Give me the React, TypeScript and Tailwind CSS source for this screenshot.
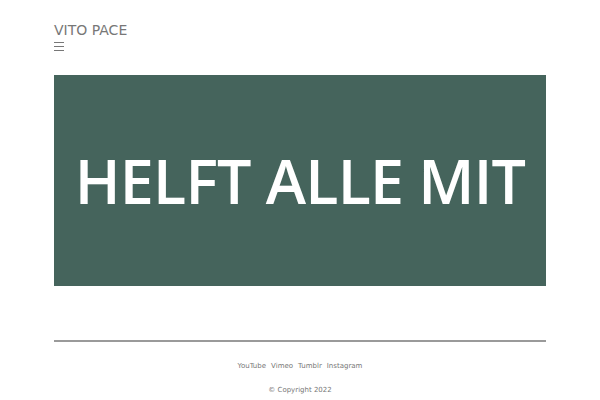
import React from "react";

const links = ["YouTube", "Vimeo", "Tumblr", "Instagram"];

export default function App() {
  return (
    <div className="w-[600px] h-[400px] bg-white overflow-hidden font-['DejaVu_Sans',sans-serif]">
      <div className="mx-[54px]">
        {/* header */}
        <header className="pt-[22px]">
          <div className="text-[14px] leading-[17px] text-[#777]">VITO PACE</div>
          <div className="mt-[3px] flex flex-col gap-[3px] w-[10px]">
            <span className="block h-px bg-[#777]" />
            <span className="block h-px bg-[#777]" />
            <span className="block h-px bg-[#777]" />
          </div>
        </header>

        {/* banner */}
        <div className="mt-[24px] h-[211px] bg-[#45645c] flex items-center justify-center">
          <span className="font-['Open_Sans',sans-serif] font-semibold text-white text-[61px] tracking-[-0.8px] leading-none">
            HELFT ALLE MIT
          </span>
        </div>

        {/* footer */}
        <footer className="mt-[54px] border-t-2 border-[#9a9a9a]">
          <nav className="mt-[20px] flex justify-center gap-[5px] text-[7px] leading-[9px] text-[#777]">
            {links.map((l) => (
              <span key={l}>{l}</span>
            ))}
          </nav>
          <div className="mt-[15px] text-center text-[7px] leading-[9px] text-[#777]">© Copyright 2022</div>
        </footer>
      </div>
    </div>
  );
}
